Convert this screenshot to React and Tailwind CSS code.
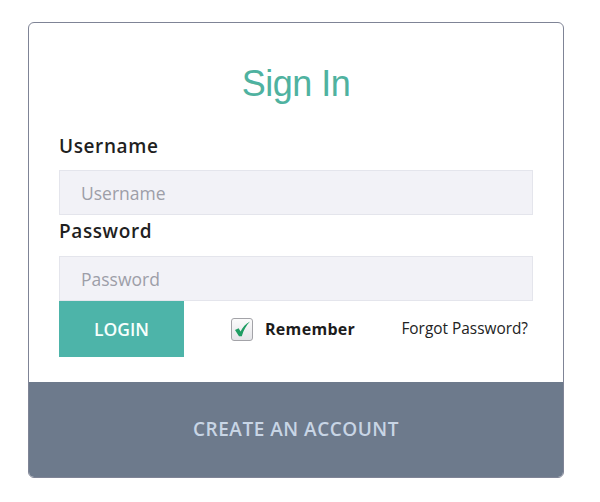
import { useState } from 'react';

const SignIn = () => {
  const [remember, setRemember] = useState(true);

  return (
    <div className="w-[536px] border border-[#7f8496] rounded-[6px] overflow-hidden bg-white">
      {/* Body */}
      <div className="px-[30px] pt-[39px] pb-[25px]">
        <h1 className="text-center text-[36px] leading-[44px] tracking-[-0.5px] text-[#4fb2a0] font-['Liberation_Sans',Arial,sans-serif]">
          Sign In
        </h1>

        <label className="block mt-[27px] text-[19px] leading-[26px] font-semibold tracking-[0.6px] text-[#1f1f1f]">
          Username
        </label>
        <input
          type="text"
          placeholder="Username"
          className="block mt-[11px] w-full h-[45px] px-[21px] bg-[#f2f2f7] border border-[#e4e5ec] text-[17.5px] text-[#333] placeholder:text-[#9d9ea8] outline-none"
        />

        <label className="block mt-[3px] text-[19px] leading-[26px] font-semibold tracking-[0.6px] text-[#1f1f1f]">
          Password
        </label>
        <input
          type="password"
          placeholder="Password"
          className="block mt-[12px] w-full h-[45px] px-[21px] bg-[#f2f2f7] border border-[#e4e5ec] text-[17.5px] text-[#333] placeholder:text-[#9d9ea8] outline-none"
        />

        <div className="flex items-center">
          <button className="w-[125px] h-[56px] bg-[#4db4a9] text-[#f7fffd] text-[17.5px] font-semibold">
            LOGIN
          </button>

          <button
            onClick={() => setRemember(!remember)}
            className="ml-[47px] flex items-center gap-[12px]"
          >
            <span className="w-[22px] h-[23px] rounded-[3px] border border-[#a3a3a8] bg-gradient-to-b from-[#fbfbfb] to-[#e4e4e8] flex items-center justify-center">
              {remember && (
                <svg width="17" height="16" viewBox="0 0 17 16">
                  <path d="M1 9 L4.6 7.2 L6.6 10.6 C8.6 6.4 11.6 3 16 0.6 C12.4 4.4 9.6 9 7.8 15.2 L5 15.2 Z" fill="#1f9d63" />
                </svg>
              )}
            </span>
            <span className="text-[16px] font-bold tracking-[0.3px] text-[#1c1c1c]">Remember</span>
          </button>

          <a className="ml-auto mr-[5px] text-[15.4px] text-[#222]">Forgot Password?</a>
        </div>
      </div>

      {/* Footer */}
      <div className="h-[95px] bg-[#6d7a8c] flex items-center justify-center">
        <span className="text-[19px] font-semibold tracking-[0.5px] text-[#c8d5e5]">
          CREATE AN ACCOUNT
        </span>
      </div>
    </div>
  );
};

export default function App() {
  return (
    <div className="w-[600px] h-[502px] bg-white pt-[22px] pl-[28px] font-['Open_Sans','Liberation_Sans',sans-serif]">
      <SignIn />
    </div>
  );
}
